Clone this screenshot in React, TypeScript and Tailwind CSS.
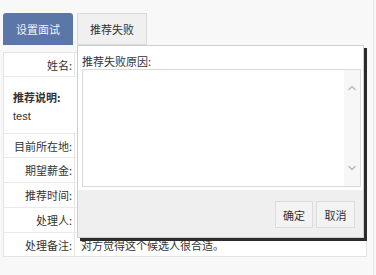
import { ChevronUp, ChevronDown } from 'lucide-react'

const rows = [
  { label: '目前所在地:', h: 'h-[24px]' },
  { label: '期望薪金:', h: 'h-[25px]' },
  { label: '推荐时间:', h: 'h-[25px]' },
  { label: '处理人:', h: 'h-[25px]' },
]

export default function App() {
  return (
    <div className="relative w-[376px] h-[275px] overflow-hidden bg-[#f8f8f8] text-[11px] leading-[14px] text-[#333] [font-family:'Noto_Sans_CJK_SC','Liberation_Sans',sans-serif]">
      <div className="w-[374px] h-full border-r border-[#e6e6e6]">
        <div className="flex gap-[4px] pl-[3px] pt-[13px]">
          <div className="w-[70px] h-[32px] rounded-t-[3px] bg-[#5a77a7] text-[#eef2f8] flex items-center justify-center">
            设置面试
          </div>
          <div className="w-[70px] h-[32px] border border-[#dadada] bg-[#f0f0f0] flex items-center justify-center">
            推荐失败
          </div>
        </div>

        <div className="ml-[3px] mt-[7px] w-[364px] bg-white border border-[#e3e3e3]">
          <Row label="姓名:" h="h-[24px]" />
          <div className="h-[57px] border-b border-[#eaeaea] pl-[9px] pt-[13px]">
            <div className="font-bold">推荐说明:</div>
            <div className="mt-[5px] [font-family:'Liberation_Sans',sans-serif]">test</div>
          </div>
          {rows.map((r) => (
            <Row key={r.label} label={r.label} h={r.h} />
          ))}
          <div className="flex h-[23px]">
            <div className="w-[71px] border-r border-[#e3e3e3] flex items-center justify-end pr-[2px]">处理备注:</div>
            <div className="flex items-center pl-[6px]">对方觉得这个候选人很合适。</div>
          </div>
        </div>
      </div>

      <div className="absolute left-[77px] top-[45px] w-[287px] h-[193px] bg-white border border-[#cfcfcf] shadow-[3px_3px_0_#2b2b2b] flex flex-col">
        <div className="h-[23px] pl-[4px] pt-[8px]">推荐失败原因:</div>
        <div className="ml-[4px] w-[279px] h-[118px] border border-[#dadada] bg-white flex justify-end">
          <div className="w-[16px] h-full bg-[#f7f7f7] flex flex-col items-center justify-between py-[12px]">
            <ChevronUp className="w-[12px] h-[12px] text-[#b8b8b8]" strokeWidth={2.5} />
            <ChevronDown className="w-[12px] h-[12px] text-[#b8b8b8]" strokeWidth={2.5} />
          </div>
        </div>
        <div className="mt-[3px] flex-1 bg-[#efefef] flex justify-end items-start gap-[3px] pt-[11px] pr-[8px]">
          <button className="w-[38px] h-[27px] border border-[#dcdcdc] bg-[#f3f3f3] text-[#333]">确定</button>
          <button className="w-[39px] h-[27px] border border-[#dcdcdc] bg-[#f3f3f3] text-[#333]">取消</button>
        </div>
      </div>
    </div>
  )
}

function Row({ label, h }: { label: string; h: string }) {
  return (
    <div className={`flex ${h} border-b border-[#eaeaea]`}>
      <div className="w-[71px] border-r border-[#e3e3e3] flex items-center justify-end pr-[2px]">{label}</div>
      <div className="flex-1" />
    </div>
  )
}
